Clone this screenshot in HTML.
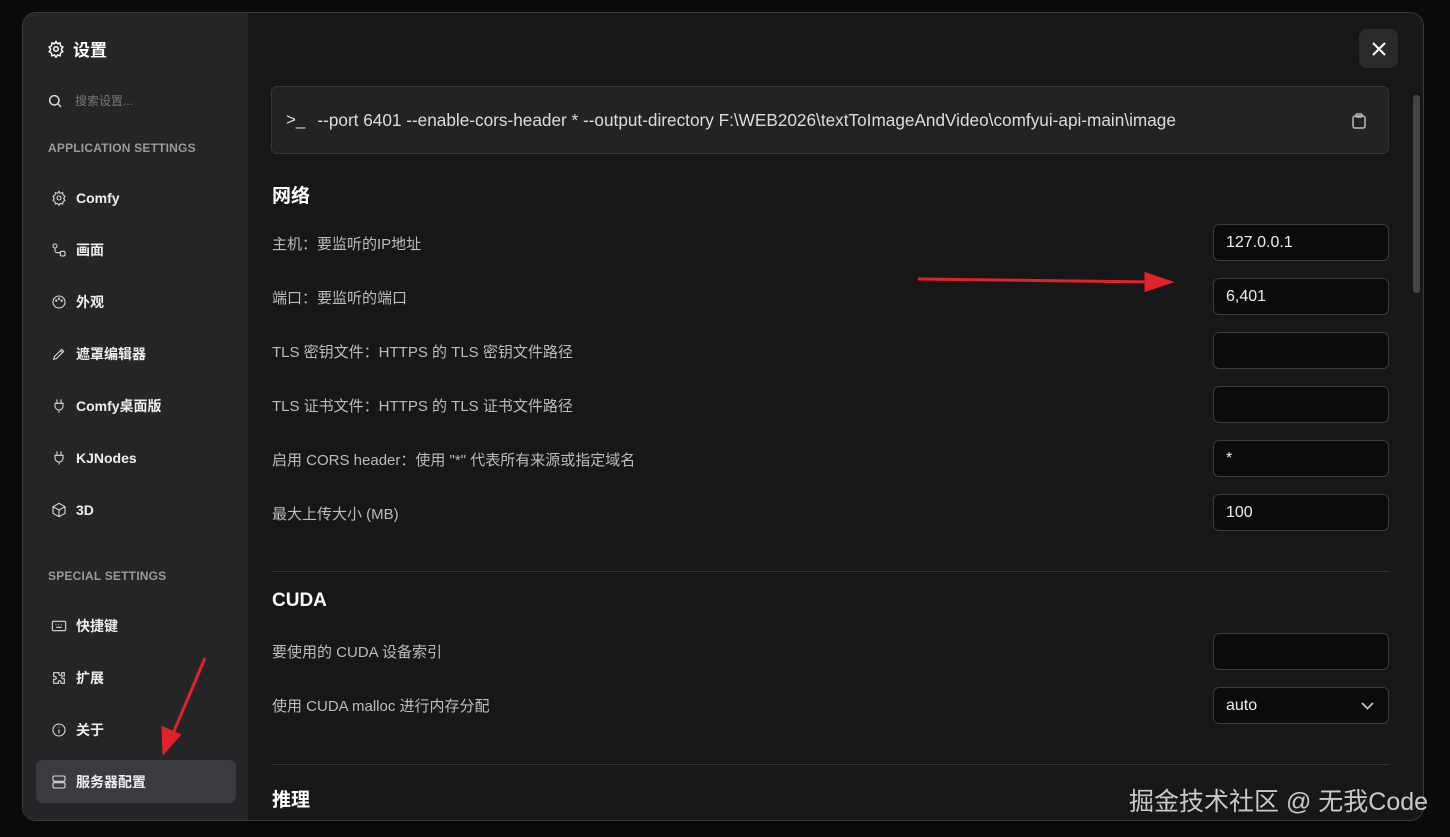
<!DOCTYPE html>
<html><head><meta charset="utf-8"><style>
*{box-sizing:border-box;margin:0;padding:0}
body{width:1450px;height:837px;background:#0a0a0a;overflow:hidden;font-family:"Liberation Sans","Noto Sans CJK SC",sans-serif;position:relative}
.modal{position:absolute;left:22px;top:12px;width:1402px;height:809px;border:1px solid #3a3a3a;border-radius:14px;background:#171717;overflow:hidden}
.side{position:absolute;left:0;top:0;width:225px;height:100%;background:#242527}
.abs{position:absolute}
.title{left:24px;top:23px;color:#fff;font-size:17px;font-weight:bold;display:flex;align-items:center;gap:8px}
.search{left:24px;top:79px;color:#777;font-size:12px;display:flex;align-items:center;gap:12px}
.sec{left:25px;color:#9a9a9a;font-size:12px;font-weight:bold;letter-spacing:.2px}
.item{left:28px;color:#eee;font-size:14px;font-weight:bold;display:flex;align-items:center;gap:9px;height:20px}
.item svg{width:16px;height:16px;fill:none;stroke:#ddd;stroke-width:1.6}
.active{position:absolute;left:13px;top:747px;width:200px;height:43px;background:#3a3b3e;border-radius:7px}
.cmd{left:248px;top:73px;width:1118px;height:68px;background:#232325;border:1px solid #333;border-radius:6px;color:#ddd;font-size:17.2px;padding:0 0 0 14px;display:flex;align-items:center}
.h{left:249px;color:#fff;font-size:19px;font-weight:bold}
.lbl{left:249px;color:#bcbcbc;font-size:15px}
.inp{left:1190px;width:176px;height:37px;background:#0b0b0b;border:1px solid #3c3c3c;border-radius:6px;color:#eee;font-size:16px;padding:0 12px;display:flex;align-items:center}
.hr{left:248px;width:1118px;height:1px;background:#333}
</style></head><body>
<div class="modal">
 <div class="side"></div>
 <div class="abs title"><svg width="18" height="18" viewBox="0 0 24 24" fill="none" stroke="#fff" stroke-width="2"><circle cx="12" cy="12" r="3"/><path d="M12 2l2 3 3.5-1 .5 3.5 3 2-2 3 2 3-3 2-.5 3.5-3.5-1-2 3-2-3-3.5 1-.5-3.5-3-2 2-3-2-3 3-2 .5-3.5 3.5 1z"/></svg>设置</div>
 <div class="abs search"><svg width="16" height="16" viewBox="0 0 24 24" fill="none" stroke="#ddd" stroke-width="2.2"><circle cx="11" cy="11" r="7"/><path d="M16 16l5 5"/></svg>搜索设置...</div>
 <div class="abs sec" style="top:128px">APPLICATION SETTINGS</div>
 <div class="abs item" style="top:175px"><svg viewBox="0 0 24 24"><circle cx="12" cy="12" r="3"/><path d="M12 2l2 3 3.5-1 .5 3.5 3 2-2 3 2 3-3 2-.5 3.5-3.5-1-2 3-2-3-3.5 1-.5-3.5-3-2 2-3-2-3 3-2 .5-3.5 3.5 1z"/></svg>Comfy</div>
 <div class="abs item" style="top:227px"><svg viewBox="0 0 24 24"><circle cx="6" cy="6" r="3"/><rect x="14" y="14" width="7" height="7" rx="2"/><path d="M6 9v4a3 3 0 003 3h5"/></svg>画面</div>
 <div class="abs item" style="top:279px"><svg viewBox="0 0 24 24"><circle cx="12" cy="12" r="9"/><circle cx="8" cy="10" r="1"/><circle cx="12" cy="7" r="1"/><circle cx="16" cy="10" r="1"/></svg>外观</div>
 <div class="abs item" style="top:331px"><svg viewBox="0 0 24 24"><path d="M4 20l4-1 11-11-3-3L5 16z"/><path d="M14 7l3 3"/></svg>遮罩编辑器</div>
 <div class="abs item" style="top:383px"><svg viewBox="0 0 24 24"><path d="M9 2v6M15 2v6M6 8h12v4a6 6 0 01-12 0zM12 18v4"/></svg>Comfy桌面版</div>
 <div class="abs item" style="top:435px"><svg viewBox="0 0 24 24"><path d="M9 2v6M15 2v6M6 8h12v4a6 6 0 01-12 0zM12 18v4"/></svg>KJNodes</div>
 <div class="abs item" style="top:487px"><svg viewBox="0 0 24 24"><path d="M12 2l9 5v10l-9 5-9-5V7zM3 7l9 5 9-5M12 12v10"/></svg>3D</div>
 <div class="abs sec" style="top:556px">SPECIAL SETTINGS</div>
 <div class="abs item" style="top:603px"><svg viewBox="0 0 24 24"><rect x="2" y="5" width="20" height="14" rx="2"/><path d="M7 10h1M11 10h1M15 10h1M8 14h8"/></svg>快捷键</div>
 <div class="abs item" style="top:655px"><svg viewBox="0 0 24 24"><path d="M8 4h4v2a2 2 0 004 0V4h4v5h-2a2 2 0 000 4h2v7h-5v-2a2 2 0 00-4 0v2H4v-6h2a2 2 0 000-4H4V4z"/></svg>扩展</div>
 <div class="abs item" style="top:707px"><svg viewBox="0 0 24 24"><circle cx="12" cy="12" r="9"/><path d="M12 11v6M12 7v1"/></svg>关于</div>
 <div class="active"></div>
 <div class="abs item" style="top:759px"><svg viewBox="0 0 24 24"><rect x="3" y="3" width="18" height="8" rx="2"/><rect x="3" y="13" width="18" height="8" rx="2"/></svg>服务器配置</div>

 <div class="abs" style="left:1336px;top:16px;width:39px;height:39px;background:#2a2a2c;border-radius:8px;display:flex;align-items:center;justify-content:center"><svg width="16" height="16" viewBox="0 0 16 16" stroke="#fff" stroke-width="2"><path d="M2 2l12 12M14 2L2 14"/></svg></div>
 <div class="abs" style="left:1390px;top:82px;width:7px;height:198px;background:#444;border-radius:3px"></div>

 <div class="abs cmd"><span style="margin-right:12px;font-size:17px">&gt;_</span>--port 6401 --enable-cors-header * --output-directory F:\WEB2026\textToImageAndVideo\comfyui-api-main\image
  <svg style="position:absolute;right:22px;top:26px" width="14" height="16" viewBox="0 0 14 16" fill="none" stroke="#bbb" stroke-width="1.5"><rect x="1" y="3" width="12" height="12" rx="2"/><rect x="4" y="1" width="6" height="3" rx="1"/></svg></div>

 <div class="abs h" style="top:168px">网络</div>
 <div class="abs lbl" style="top:220px">主机：要监听的IP地址</div><div class="abs inp" style="top:211px">127.0.0.1</div>
 <div class="abs lbl" style="top:274px">端口：要监听的端口</div><div class="abs inp" style="top:265px">6,401</div>
 <div class="abs lbl" style="top:328px">TLS 密钥文件：HTTPS 的 TLS 密钥文件路径</div><div class="abs inp" style="top:319px"></div>
 <div class="abs lbl" style="top:382px">TLS 证书文件：HTTPS 的 TLS 证书文件路径</div><div class="abs inp" style="top:373px"></div>
 <div class="abs lbl" style="top:436px">启用 CORS header：使用 "*" 代表所有来源或指定域名</div><div class="abs inp" style="top:427px">*</div>
 <div class="abs lbl" style="top:490px">最大上传大小 (MB)</div><div class="abs inp" style="top:481px">100</div>
 <div class="abs hr" style="top:558px"></div>
 <div class="abs h" style="top:577px">CUDA</div>
 <div class="abs lbl" style="top:628px">要使用的 CUDA 设备索引</div><div class="abs inp" style="top:620px"></div>
 <div class="abs lbl" style="top:682px">使用 CUDA malloc 进行内存分配</div><div class="abs inp" style="top:674px">auto<svg style="position:absolute;right:14px;top:14px" width="13" height="8" viewBox="0 0 13 8" fill="none" stroke="#ccc" stroke-width="1.6"><path d="M1 1l5.5 5.5L12 1"/></svg></div>
 <div class="abs hr" style="top:751px"></div>
 <div class="abs h" style="top:772px">推理</div>
</div>
<svg class="abs" style="left:0;top:0" width="1450" height="837"><g stroke="#e0222a" stroke-width="3" fill="#e0222a"><path d="M918 279L1150 282" fill="none"/><path d="M1170 282l-24-8v16z"/><path d="M205 658L172 736" fill="none"/><path d="M164 752l-1-24 16 7z"/></g></svg>
<div class="abs" style="left:1129px;top:782px;color:#e8e8e8;font-size:25px;opacity:.85">掘金技术社区 @ 无我Code</div>
</body></html>
